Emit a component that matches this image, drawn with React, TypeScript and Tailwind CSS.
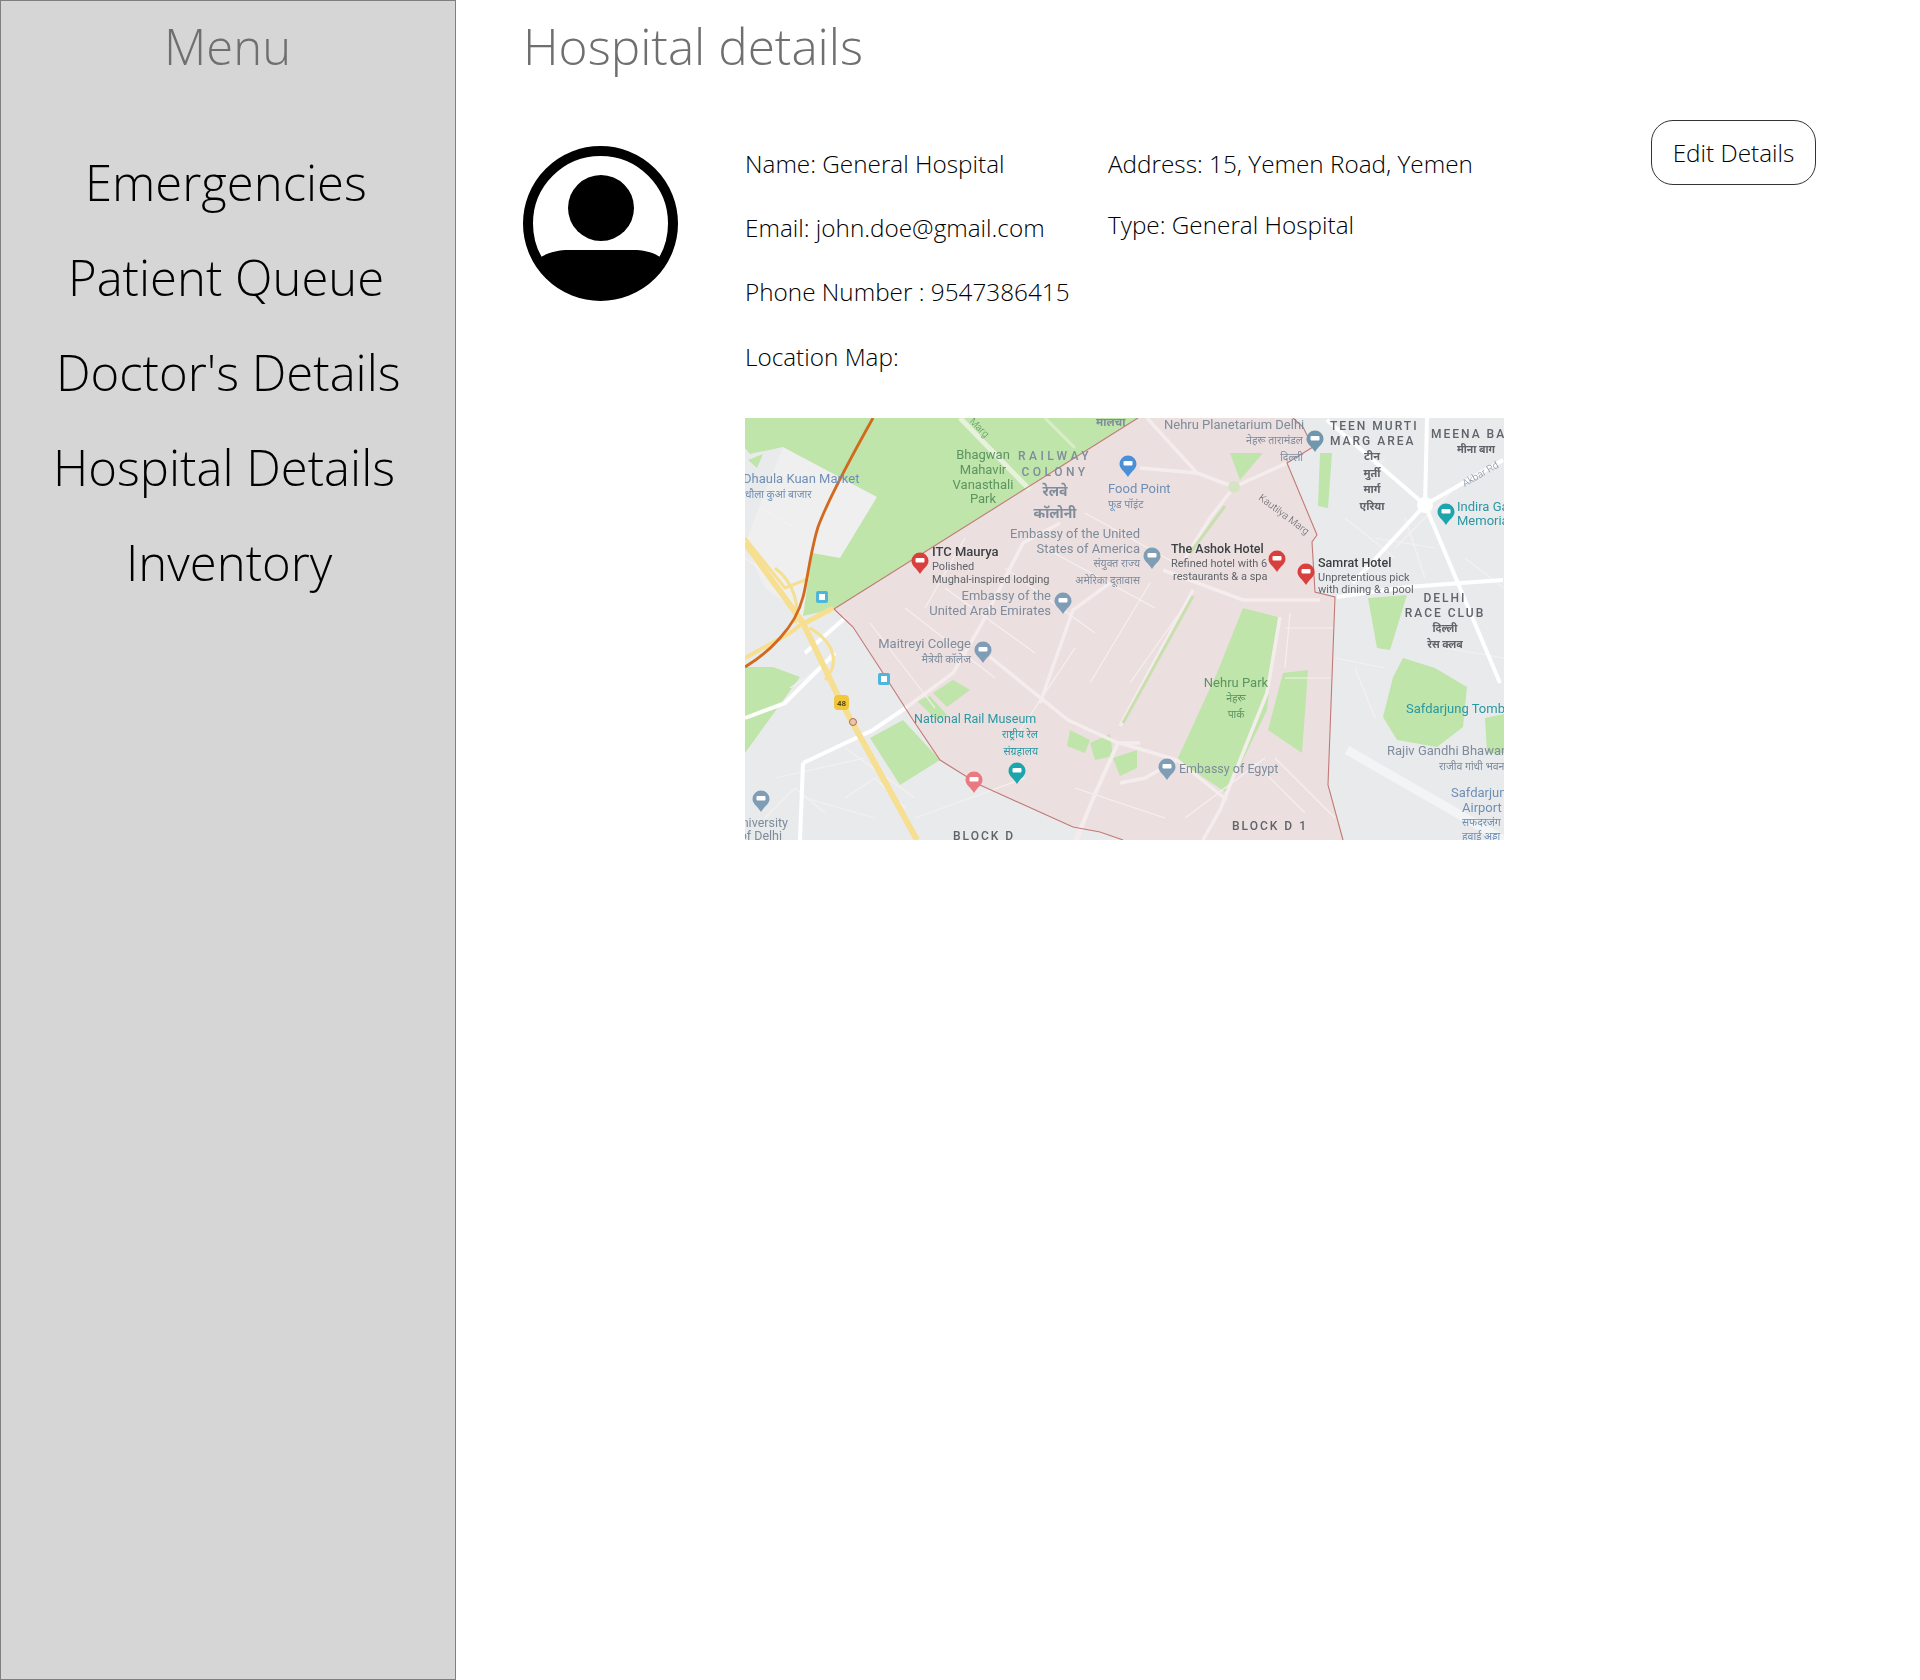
const items = [
  { t: "Emergencies", c: "pl-[84px]" },
  { t: "Patient Queue", c: "pl-[67px]" },
  { t: "Doctor's Details", c: "pl-[55px]" },
  { t: "Hospital Details", c: "pl-[52px]" },
  { t: "Inventory", c: "pl-[125px]" },
];

type L = [string, number, number, number?, string?, string?, number?, number?];
// text, x, y, size, colour, anchor, weight, spacing
const grey = "#7e8c9c";
const blue = "#6f8fb5";
const green = "#5c9460";
const teal = "#2b98a3";
const dark = "#5f646a";
const labels: L[] = [
  ["Dhaula Kuan Market", -2, 65, 13, blue],
  ["धौला कुआं बाजार", 0, 80, 10.5, blue],
  ["Bhagwan", 238, 41, 13, green, "middle"],
  ["Mahavir", 238, 56, 13, green, "middle"],
  ["Vanasthali", 238, 71, 13, green, "middle"],
  ["Park", 238, 85, 13, green, "middle"],
  ["RAILWAY", 310, 42, 12, grey, "middle", 500, 3.5],
  ["COLONY", 310, 58, 12, grey, "middle", 500, 3.5],
  ["रेलवे", 310, 78, 14, grey, "middle", 700],
  ["कॉलोनी", 310, 100, 14, grey, "middle", 700],
  ["मालचा", 351, 8, 11, grey, "start", 700],
  ["Food Point", 363, 75, 13, blue],
  ["फूड पॉइंट", 363, 90, 10.5, blue],
  ["Embassy of the United", 395, 120, 13, grey, "end"],
  ["States of America", 395, 135, 13, grey, "end"],
  ["संयुक्त राज्य", 395, 149, 10.5, grey, "end"],
  ["अमेरिका दूतावास", 395, 166, 10.5, grey, "end"],
  ["ITC Maurya", 187, 138, 13, "#3c4043", "start", 500],
  ["Polished", 187, 152, 11, dark],
  ["Mughal-inspired lodging", 187, 165, 11, dark],
  ["Embassy of the", 306, 182, 13, grey, "end"],
  ["United Arab Emirates", 306, 197, 13, grey, "end"],
  ["Maitreyi College", 226, 230, 13, grey, "end"],
  ["मैत्रेयी कॉलेज", 226, 245, 10.5, grey, "end"],
  ["National Rail Museum", 169, 305, 12.5, teal],
  ["राष्ट्रीय रेल", 293, 320, 10.5, teal, "end"],
  ["संग्रहालय", 293, 337, 10.5, teal, "end"],
  ["University", 43, 409, 12.5, grey, "end"],
  ["of Delhi", 37, 422, 12.5, grey, "end"],
  ["BLOCK D", 208, 422, 12, dark, "start", 500, 2],
  ["Nehru Planetarium Delhi", 419, 11, 13, grey],
  ["नेहरू तारामंडल", 558, 26, 10.5, grey, "end"],
  ["दिल्ली", 558, 43, 10.5, grey, "end"],
  ["TEEN MURTI", 585, 12, 12, dark, "start", 500, 2],
  ["MARG AREA", 585, 27, 12, dark, "start", 500, 2],
  ["टीन", 627, 42, 11, dark, "middle", 700],
  ["मुर्ती", 627, 59, 11, dark, "middle", 700],
  ["मार्ग", 627, 75, 11, dark, "middle", 700],
  ["एरिया", 627, 92, 11, dark, "middle", 700],
  ["MEENA BAGH", 686, 20, 12, dark, "start", 500, 2],
  ["मीना बाग", 731, 35, 10.5, dark, "middle", 700],
  ["Indira Gandhi", 712, 93, 13, teal],
  ["Memorial", 712, 107, 13, teal],
  ["The Ashok Hotel", 426, 135, 12.5, "#3c4043", "start", 500],
  ["Refined hotel with 6", 426, 149, 11, dark],
  ["restaurants & a spa", 428, 162, 11, dark],
  ["Samrat Hotel", 573, 149, 12.5, "#3c4043", "start", 500],
  ["Unpretentious pick", 573, 163, 11, dark],
  ["with dining & a pool", 573, 175, 11, dark],
  ["DELHI", 700, 184, 12, dark, "middle", 500, 2],
  ["RACE CLUB", 700, 199, 12, dark, "middle", 500, 2],
  ["दिल्ली", 700, 214, 10.5, dark, "middle", 700],
  ["रेस क्लब", 700, 230, 10.5, dark, "middle", 700],
  ["Nehru Park", 491, 269, 13, green, "middle"],
  ["नेहरू", 491, 284, 10.5, green, "middle"],
  ["पार्क", 491, 300, 10.5, green, "middle"],
  ["Embassy of Egypt", 434, 355, 12.5, grey],
  ["Safdarjung Tomb", 661, 295, 13, teal],
  ["Rajiv Gandhi Bhawan", 642, 337, 13, grey],
  ["राजीव गांधी भवन", 694, 352, 10.5, grey],
  ["Safdarjung", 706, 379, 13, blue],
  ["Airport", 717, 394, 13, blue],
  ["सफदरजंग", 717, 408, 10.5, blue],
  ["हवाई अड्डा", 717, 422, 10.5, blue],
  ["BLOCK D 1", 487, 412, 12, dark, "start", 500, 2],
];

const pins: [number, number, string][] = [
  [383, 47, "#4a90d9"],
  [407, 139, "#7f9db5"],
  [318, 184, "#7f9db5"],
  [238, 233, "#7f9db5"],
  [16, 382, "#7f9db5"],
  [570, 22, "#6f97ad"],
  [422, 350, "#7f9db5"],
  [272, 354, "#1fa5ad"],
  [701, 95, "#1fa5ad"],
  [229, 363, "#ea7a80"],
  [175, 144, "#d9413c"],
  [532, 142, "#d9413c"],
  [561, 155, "#d9413c"],
];

const greens: string[] = [
  "0,0 393,0 89,191 58,198 67,135 95,140 132,79 38,29 5,36 0,30",
  "0,249 28,249 55,259 0,335",
  "125,320 158,302 195,342 155,367",
  "498,190 533,199 522,292 482,375 432,342 472,255",
  "538,255 563,252 557,335 523,312",
  "658,240 690,250 722,269 718,309 692,329 652,322 638,299 648,259",
  "485,35 518,35 495,62",
  "575,35 587,35 583,90 573,88",
  "623,180 662,177 645,232 632,230",
  "188,275 208,262 225,272 202,289",
  "172,283 185,278 202,297 192,302",
  "325,312 345,322 340,335 322,328",
  "345,325 365,316 368,338 350,342",
  "368,340 392,332 392,350 375,358",
  "740,300 759,296 759,335 742,335",
  "3,42 18,36 12,50",
];

const whiteRoads: string[] = [
  "M0 300 L40 285 L90 235",
  "M58 345 L128 312 L162 289",
  "M58 345 L55 422",
  "M582 2 L680 87",
  "M680 87 L755 265",
  "M680 87 L758 42",
  "M680 87 L608 165",
  "M592 179 L662 169 L758 162",
  "M682 0 L680 87",
  "M100 200 L60 235",
];

const pinkRoads: string[] = [
  "M245 239 L323 302 L373 325 L395 325",
  "M373 325 L350 375 L332 422",
  "M162 289 L208 255 L235 209 L278 125 L315 105",
  "M295 285 L328 192 L365 165",
  "M489 69 L542 45",
  "M489 69 L452 55 L402 0",
  "M489 69 L465 100 L440 140",
  "M418 152 L498 182 L575 182",
  "M535 199 L522 275 L475 392 L458 422",
  "M375 325 L432 342 L482 382",
  "M448 172 L375 308",
  "M373 325 L330 422",
  "M395 50 L452 55",
  "M432 342 L400 360 L375 365",
];

const thinRoads: string[] = [
  "M125 205 L190 290","M160 190 L250 260","M200 170 L290 235","M260 150 L350 215",
  "M300 130 L410 190","M340 95 L430 145","M385 265 L445 180","M345 265 L405 165",
  "M270 320 L330 230","M540 210 L590 210","M540 260 L585 260","M545 195 L540 250",
  "M440 400 L520 340","M530 340 L590 400","M30 360 L120 340","M60 380 L130 400",
  "M630 120 L690 130","M660 100 L680 160","M610 250 L630 300","M650 130 L710 70",
  "M0 140 L35 165","M15 90 L50 110","M45 270 L90 240","M170 400 L280 360",
  "M100 330 L170 380","M330 370 L420 400","M720 140 L759 170","M700 230 L759 240",
  "M640 40 L620 60","M600 100 L650 140","M220 120 L180 190","M590 240 L640 250",
  "M20 400 L50 370 L80 395","M100 380 L130 360 L160 390","M510 345 L560 395",
];

function MapDrawing() {
  return (
    <svg width="759" height="422" viewBox="0 0 759 422" className="block">
      <defs>
        <filter id="soft" x="0" y="0" width="100%" height="100%">
          <feGaussianBlur stdDeviation="0.4" />
        </filter>
      </defs>
      <rect width="759" height="422" fill="#e9eaec" />
      <g filter="url(#soft)">
        <polygon
          points="89,191 393,0 548,0 558,9 568,29 542,45 572,117 567,124 570,174 590,179 583,367 598,422 378,422 355,414 328,409 235,367 195,342 168,302 138,255 108,209"
          fill="#ecdfdf"
        />
        <polygon points="0,125 38,29 132,79 95,140 67,135 58,198 20,170" fill="#efeff0" />
        {greens.map((p) => (
          <polygon key={p} points={p} fill="#bfe5ab" />
        ))}
        {thinRoads.map((d) => (
          <path key={d} d={d} stroke="#f6f0f0" strokeWidth="1.2" fill="none" />
        ))}
        {whiteRoads.map((d) => (
          <path key={d} d={d} stroke="#ffffff" strokeWidth="4" fill="none" />
        ))}
        {pinkRoads.map((d) => (
          <path key={d} d={d} stroke="#f5eded" strokeWidth="3.5" fill="none" />
        ))}
        <path d="M602 332 L759 422" stroke="#f3f4f5" strokeWidth="9" fill="none" />
        <path d="M448 178 L378 305" stroke="#c9dfb0" strokeWidth="3" fill="none" />
        <path d="M480 88 L445 135" stroke="#c9dfb0" strokeWidth="3" fill="none" />
        <circle cx="489" cy="69" r="6" fill="#d5e5c4" />
        <circle cx="680" cy="87" r="8" fill="#ffffff" />
        <path d="M215 0 L285 72" stroke="#e8f1dc" strokeWidth="5" fill="none" />
        <path d="M300 0 L330 30" stroke="#d7eec9" strokeWidth="3" fill="none" />
        <path
          d="M89 191 L393 0 M548 0 L558 9 L568 29 L542 45 L572 117 L567 124 L570 174 L590 179 L583 367 L598 422 M378 422 L355 414 L328 409 L235 367 L195 342 L168 302 L138 255 L108 209 L89 191"
          stroke="#c27a76"
          strokeWidth="1.1"
          fill="none"
        />
        <path d="M0 125 L58 205 L95 282 L172 422" stroke="#f6df90" strokeWidth="6" fill="none" />
        <path d="M0 120 L40 170 L65 160" stroke="#f6df90" strokeWidth="3" fill="none" />
        <path d="M60 205 L88 190" stroke="#f6df90" strokeWidth="5" fill="none" />
        <path d="M65 210 C90 225 95 245 80 262" stroke="#f6df90" strokeWidth="3" fill="none" />
        <path d="M30 150 C50 165 55 190 50 205" stroke="#f6df90" strokeWidth="3" fill="none" />
        <path d="M0 240 L45 215 L58 205" stroke="#f6df90" strokeWidth="4" fill="none" />
        <path d="M128 0 C100 50 80 90 73 109 C65 135 62 165 58 179 C54 195 45 209 35 220 C22 235 10 243 0 249" stroke="#d2691e" strokeWidth="2.8" fill="none" />
        <rect x="71" y="173" width="12" height="12" rx="2" fill="#4db6da" />
        <rect x="74" y="176" width="6" height="6" fill="#ffffff" />
        <rect x="133" y="255" width="12" height="12" rx="2" fill="#4db6da" />
        <rect x="136" y="258" width="6" height="6" fill="#ffffff" />
        <rect x="89" y="277" width="15" height="15" rx="4" fill="#f1c83e" />
        <text x="96.5" y="288" fontSize="8" fontWeight="700" textAnchor="middle" fill="#5b4a10" fontFamily="Roboto, sans-serif">48</text>
        <circle cx="108" cy="304" r="3.5" fill="#e5c9a6" stroke="#b5645b" />
        {pins.map(([x, y, c]) => (
          <g key={`${x}-${y}`}>
            <path d={`M${x - 8.5} ${y - 1} a8.5 8.5 0 1 1 17 0 c0 5 -5 7 -8.5 13 c-3.5 -6 -8.5 -8 -8.5 -13z`} fill={c} />
            <rect x={x - 4.5} y={y - 4} width="9" height="4.5" rx="1" fill="#ffffff" />
          </g>
        ))}
        {labels.map(([t, x, y, s, c, a, w, ls]) => (
          <text
            key={`${t}-${x}-${y}`}
            x={x}
            y={y}
            fontSize={s}
            fill={c}
            textAnchor={(a ?? "start") as "start" | "middle" | "end"}
            fontWeight={w ?? 400}
            letterSpacing={ls ?? 0}
            fontFamily="Roboto, 'Noto Sans', sans-serif"
          >
            {t}
          </text>
        ))}
        <text x="737" y="59" fontSize="10" fill={grey} textAnchor="middle" fontFamily="Roboto, sans-serif" transform="rotate(-30 737 59)">Akbar Rd</text>
        <text x="537" y="99" fontSize="10" fill={dark} textAnchor="middle" fontFamily="Roboto, sans-serif" transform="rotate(37 537 99)">Kautilya Marg</text>
        <text x="232" y="12" fontSize="10" fill={green} textAnchor="middle" fontFamily="Roboto, sans-serif" transform="rotate(45 232 12)">Marg</text>
      </g>
    </svg>
  );
}

function Avatar() {
  return (
    <svg width="155" height="155" viewBox="0 0 155 155" className="shrink-0">
      <circle cx="77.5" cy="77.5" r="72.5" fill="none" stroke="#000" strokeWidth="10" />
      <circle cx="78" cy="62" r="33" fill="#000" />
      <path d="M18 111 C26 106 36 104 46 104 L110 104 C120 104 130 106 137 111 A66 66 0 0 1 18 111 Z" fill="#000" />
    </svg>
  );
}

export default function App() {
  return (
    <div className="flex min-h-[1680px] bg-white font-['Open_Sans',sans-serif] font-light text-black">
      <aside className="w-[456px] shrink-0 border border-[#7f7f7f] bg-[#d6d6d6]">
        <h2 className="pl-[163px] pt-[15px] text-[49px] leading-[60px] font-light text-[#6f6f6f]">Menu</h2>
        <nav className="mt-[76px] flex flex-col gap-[35px]">
          {items.map((i) => (
            <div key={i.t} className={`${i.c} text-[49px] leading-[60px] whitespace-nowrap`}>
              {i.t}
            </div>
          ))}
        </nav>
      </aside>
      <main className="flex-1 pl-[67px]">
        <h1 className="pt-[16px] text-[49.5px] leading-[60px] font-light text-[#6f6f6f]">Hospital details</h1>
        <div className="mt-[44px] flex items-start">
          <div className="mt-[26px] w-[222px]">
            <Avatar />
          </div>
          <div className="w-[906px] shrink-0">
            <div className="flex pt-[26px] text-[24.3px] leading-[36px] font-light">
              <div className="flex w-[363px] flex-col gap-[28px]">
                <div>Name: General Hospital</div>
                <div>Email: john.doe@gmail.com</div>
                <div>Phone Number : 9547386415</div>
                <div className="pt-[1px]">Location Map:</div>
              </div>
              <div className="flex flex-col gap-[25px]">
                <div>Address: 15, Yemen Road, Yemen</div>
                <div>Type: General Hospital</div>
              </div>
            </div>
            <div className="mt-[43px]">
              <MapDrawing />
            </div>
          </div>
          <button className="flex h-[65px] w-[165px] items-center justify-center rounded-[22px] border border-[#333] pt-[2px] text-[24.3px] font-light text-black">
            Edit Details
          </button>
        </div>
      </main>
    </div>
  );
}
